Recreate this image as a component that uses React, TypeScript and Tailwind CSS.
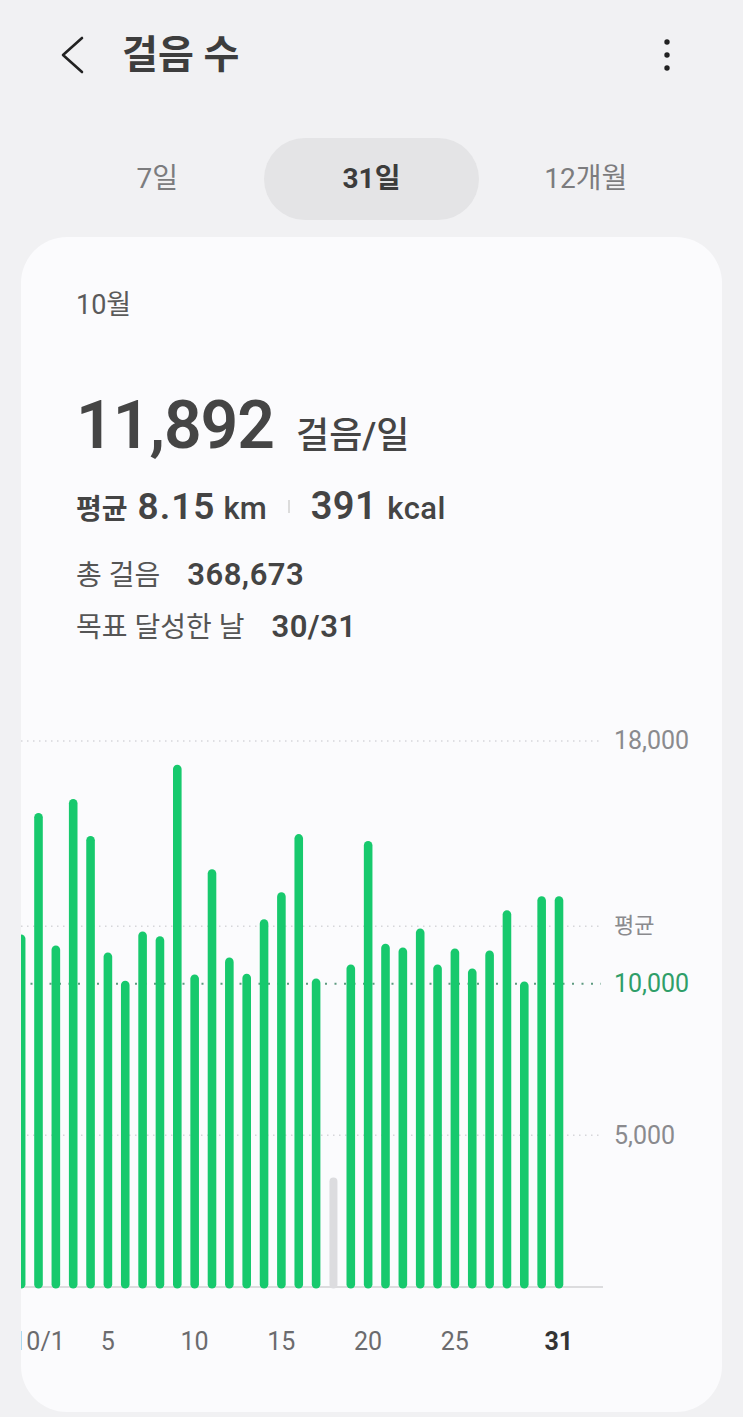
const steps = [
  11620, 15630, 11260, 16090, 14870, 11030, 10100, 11720, 11560, 17220, 10300,
  13770, 10860, 10330, 12120, 13010, 14930, 10170, 3610, 10630, 14700, 11320,
  11190, 11820, 10630, 11160, 10500, 11090, 12420, 10070, 12880, 12880,
];

// chart geometry (svg coords, card-left = 0, chart top = 0)
const BASE = 567;
const K = 546 / 18000;
const COL = 17.35;
const yOf = (v: number) => BASE - v * K;
const xOf = (d: number) => 0.15 + d * COL;

const xLabels: Record<number, string> = { 1: "10/1", 5: "5", 10: "10", 15: "15", 20: "20", 25: "25", 31: "31" };

function Chart() {
  return (
    <div className="relative mt-[73px] h-[570px]">
      <svg width="582" height="570" viewBox="0 0 582 570" className="block">
        <line x1="0" x2="580" y1={yOf(18000)} y2={yOf(18000)} stroke="#d6d6da" strokeWidth="1.5" strokeDasharray="1.5 4.5" />
        <line x1="0" x2="580" y1={yOf(11892)} y2={yOf(11892)} stroke="#d6d6da" strokeWidth="1.5" strokeDasharray="1.5 4.5" />
        <line x1="0" x2="580" y1={yOf(5000)} y2={yOf(5000)} stroke="#d6d6da" strokeWidth="1.5" strokeDasharray="1.5 4.5" />
        <line x1="0" x2="580" y1={yOf(10000)} y2={yOf(10000)} stroke="#5e9a80" strokeWidth="2" strokeDasharray="2 7.5" />
        <line x1="0" x2="582" y1={BASE} y2={BASE} stroke="#dcdcde" strokeWidth="2" />
        {steps.map((v, d) => {
          const top = yOf(v);
          const gray = v < 10000;
          const w = gray ? 8 : 8.6;
          return (
            <rect
              key={d}
              x={xOf(d) - w / 2}
              y={top}
              width={w}
              height={BASE + 1.5 - top}
              rx={w / 2}
              fill={gray ? "#dcdcdf" : "#17c96d"}
            />
          );
        })}
      </svg>
      <div className="absolute left-[593px] top-[6px] h-[30px] text-[25px] leading-[30px] text-[#8a8a8e]">18,000</div>
      <div className="absolute left-[593px] top-[191px] h-[30px] text-[22px] leading-[30px] text-[#8a8a8e]">평균</div>
      <div className="absolute left-[593px] top-[249px] h-[30px] text-[25px] leading-[30px] text-[#2f9e69]">10,000</div>
      <div className="absolute left-[593px] top-[401px] h-[30px] text-[25px] leading-[30px] text-[#8a8a8e]">5,000</div>
    </div>
  );
}

export default function App() {
  return (
    <div className="h-[1417px] overflow-hidden bg-[#f1f1f3] font-['Roboto','Noto_Sans_CJK_KR',sans-serif] text-[#444]">
      {/* header */}
      <div className="flex h-[110px] items-center pl-[58px] pr-[73px]">
        <svg width="28" height="40" viewBox="0 0 28 40">
          <path d="M24 3 L5 20 L24 37" stroke="#222" strokeWidth="2.6" fill="none" strokeLinecap="round" strokeLinejoin="round" />
        </svg>
        <h1 className="ml-[36px] text-[39px] font-bold text-[#3d3d3d]">걸음 수</h1>
        <svg className="ml-auto" width="6" height="32" viewBox="0 0 6 32">
          <circle cx="3" cy="3" r="2.7" fill="#222" />
          <circle cx="3" cy="16" r="2.7" fill="#222" />
          <circle cx="3" cy="29" r="2.7" fill="#222" />
        </svg>
      </div>

      {/* tabs */}
      <div className="mx-[50px] mt-[28px] grid h-[82px] grid-cols-3 text-[28px]">
        <div className="flex items-center justify-center text-[#7c7c7e]">7일</div>
        <div className="flex items-center justify-center rounded-full bg-[#e4e4e6] font-bold text-[#3c3c3c]">31일</div>
        <div className="flex items-center justify-center text-[#7c7c7e]">12개월</div>
      </div>

      {/* card */}
      <div className="mx-[21px] mt-[17px] h-[1175px] overflow-hidden rounded-[46px] bg-[#fbfbfd]">
        <div className="pl-[55px] pt-[48px] whitespace-nowrap">
          <div className="h-[40px] text-[27px] leading-[40px] text-[#5a5a5a]">10월</div>
          <div className="mt-[61px] h-[80px] leading-[80px] text-[#454545]">
            <span className="text-[66px] font-semibold tracking-[-1px]">11,892</span>
            <span className="ml-[22px] text-[36px] font-medium">걸음/일</span>
          </div>
          <div className="mt-[18px] flex h-[44px] items-baseline leading-[44px] text-[#444]">
            <span className="text-[28px] font-bold">평균</span>
            <span className="ml-[10px] text-[37px] font-semibold tracking-[1px]">8.15</span>
            <span className="ml-[8px] text-[31px] font-medium">km</span>
            <span className="mx-[21px] inline-block h-[13px] w-[2px] self-center bg-[#dcdcdc]" />
            <span className="text-[38px] font-semibold tracking-[0.5px]">391</span>
            <span className="ml-[10px] text-[31px] font-medium tracking-[0.5px]">kcal</span>
          </div>
          <div className="mt-[27px] h-[40px] leading-[40px]">
            <span className="text-[28px] text-[#555]">총 걸음</span>
            <span className="ml-[27px] text-[31px] font-semibold tracking-[0.5px] text-[#444]">368,673</span>
          </div>
          <div className="mt-[12px] h-[40px] leading-[40px]">
            <span className="text-[28px] text-[#555]">목표 달성한 날</span>
            <span className="ml-[27px] text-[31px] font-semibold tracking-[0.5px] text-[#444]">30/31</span>
          </div>
        </div>

        <Chart />

        <div className="ml-[-8.5px] mt-[32px] flex h-[40px] leading-[40px]">
          {steps.map((_, d) => (
            <div key={d} className="flex w-[17.35px] shrink-0 justify-center whitespace-nowrap">
              {xLabels[d] ? (
                <span className={d === 31 ? "text-[25px] font-bold text-[#333]" : "text-[25px] text-[#6b6b6e]"}>{xLabels[d]}</span>
              ) : null}
            </div>
          ))}
        </div>
      </div>
    </div>
  );
}
